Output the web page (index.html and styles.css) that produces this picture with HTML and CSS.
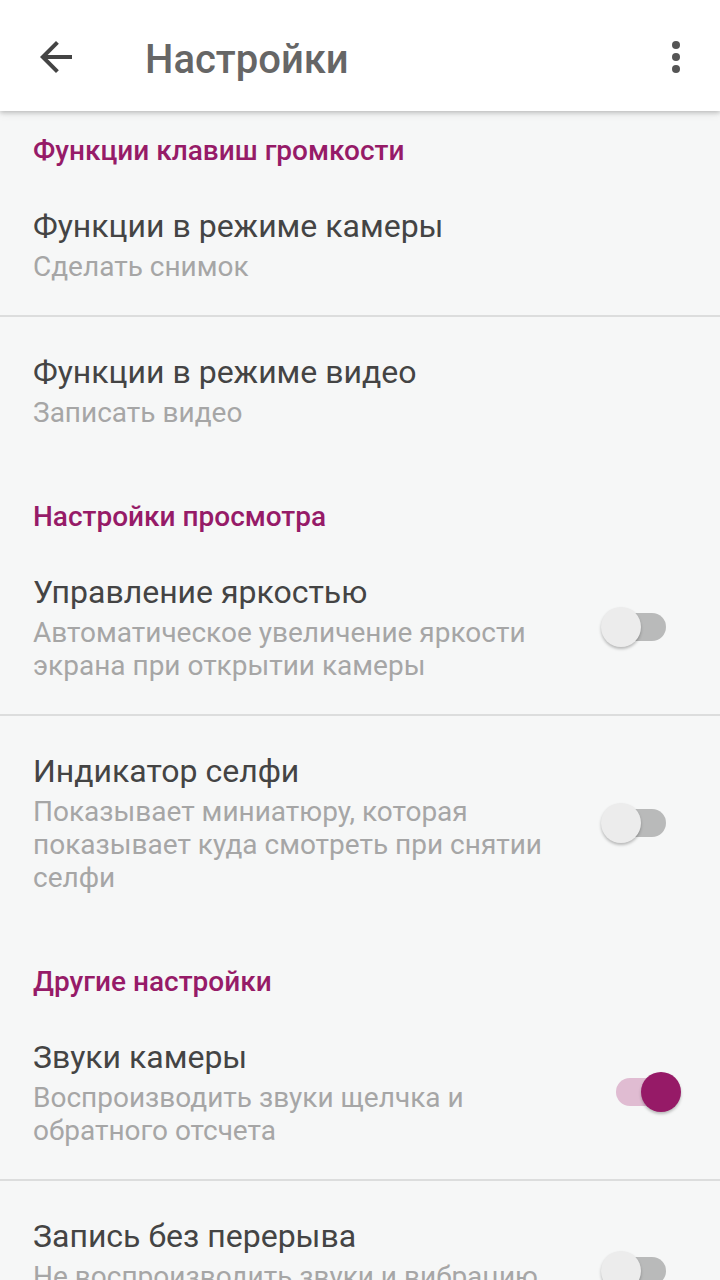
FILE: index.html
```html
<!DOCTYPE html>
<html lang="ru">
<head>
<meta charset="utf-8">
<title>Настройки</title>
<link rel="stylesheet" href="styles.css">
</head>
<body>
<div class="screen">
  <header class="toolbar">
    <button class="icon-btn back" aria-label="Назад">
      <svg viewBox="0 0 24 24" width="48" height="48"><path d="M20 11H7.83l5.59-5.59L12 4l-8 8 8 8 1.41-1.41L7.83 13H20v-2z" fill="#444"/></svg>
    </button>
    <h1 class="title">Настройки</h1>
    <button class="icon-btn more" aria-label="Ещё">
      <svg viewBox="0 0 24 24" width="48" height="48"><circle cx="12" cy="6" r="2" fill="#555"/><circle cx="12" cy="12" r="2" fill="#555"/><circle cx="12" cy="18" r="2" fill="#555"/></svg>
    </button>
  </header>

  <main class="list">
    <div class="category first">Функции клавиш громкости</div>
    <div class="item">
      <div class="text">
        <div class="item-title">Функции в режиме камеры</div>
        <div class="item-summary">Сделать снимок</div>
      </div>
    </div>
    <div class="divider"></div>
    <div class="item">
      <div class="text">
        <div class="item-title">Функции в режиме видео</div>
        <div class="item-summary">Записать видео</div>
      </div>
    </div>

    <div class="category">Настройки просмотра</div>
    <div class="item">
      <div class="text">
        <div class="item-title">Управление яркостью</div>
        <div class="item-summary">Автоматическое увеличение яркости экрана при открытии камеры</div>
      </div>
      <div class="switch"><span class="track"></span><span class="thumb"></span></div>
    </div>
    <div class="divider"></div>
    <div class="item">
      <div class="text">
        <div class="item-title">Индикатор селфи</div>
        <div class="item-summary">Показывает миниатюру, которая показывает куда смотреть при снятии селфи</div>
      </div>
      <div class="switch"><span class="track"></span><span class="thumb"></span></div>
    </div>

    <div class="category">Другие настройки</div>
    <div class="item">
      <div class="text">
        <div class="item-title">Звуки камеры</div>
        <div class="item-summary">Воспроизводить звуки щелчка и обратного отсчета</div>
      </div>
      <div class="switch on"><span class="track"></span><span class="thumb"></span></div>
    </div>
    <div class="divider"></div>
    <div class="item">
      <div class="text">
        <div class="item-title">Запись без перерыва</div>
        <div class="item-summary">Не воспроизводить звуки и вибрацию при записи видео</div>
      </div>
      <div class="switch"><span class="track"></span><span class="thumb"></span></div>
    </div>
  </main>
</div>
</body>
</html>
```
FILE: styles.css
```css
* { box-sizing: border-box; }
html, body {
  margin: 0;
  padding: 0;
  height: 1280px;
  overflow: hidden;
  background: #f6f7f7;
  font-family: Roboto, "Noto Sans", sans-serif;
}
.screen {
  width: 720px;
  height: 1280px;
  overflow: hidden;
  position: relative;
  background: #f6f7f7;
}
.toolbar {
  position: relative;
  z-index: 2;
  height: 111px;
  background: #fff;
  display: flex;
  align-items: center;
  padding: 0 20px 0 32px;
  box-shadow: 0 2px 4px rgba(0,0,0,0.18), 0 4px 8px rgba(0,0,0,0.06);
}
.icon-btn {
  width: 48px;
  height: 48px;
  padding: 0;
  border: 0;
  background: none;
  display: flex;
  margin-top: 3px;
}
.title {
  margin: 8px 0 0 65px;
  flex: 1;
  font-size: 40px;
  font-weight: 500;
  color: #666;
  line-height: 48px;
}
.list {
  display: flex;
  flex-direction: column;
}
.category {
  padding: 41px 33px 5px;
  font-size: 28px;
  line-height: 30px;
  font-weight: 500;
  color: #961b68;
}
.category.first { padding-top: 25px; }
.item {
  display: flex;
  align-items: center;
  padding: 35px 39px 32px 33px;
}
.text {
  flex: 1;
  max-width: 540px;
}
.item-title {
  font-size: 32px;
  line-height: 40px;
  color: #444;
  margin-bottom: 4px;
}
.item-summary {
  font-size: 28px;
  line-height: 33px;
  color: #a6a6a6;
}
.divider {
  height: 2px;
  background: #dcdddd;
}
.switch {
  position: relative;
  width: 80px;
  height: 40px;
  margin-left: auto;
  flex-shrink: 0;
}
.track {
  position: absolute;
  left: 15px;
  top: 6px;
  width: 50px;
  height: 28px;
  border-radius: 14px;
  background: #b9baba;
}
.thumb {
  position: absolute;
  left: 0;
  top: 0;
  width: 40px;
  height: 40px;
  border-radius: 50%;
  background: #ececec;
  box-shadow: 0 2px 3px rgba(0,0,0,0.25);
}
.switch.on .track { background: #e0bcd2; }
.switch.on .thumb { left: 40px; background: #961a67; }
```
